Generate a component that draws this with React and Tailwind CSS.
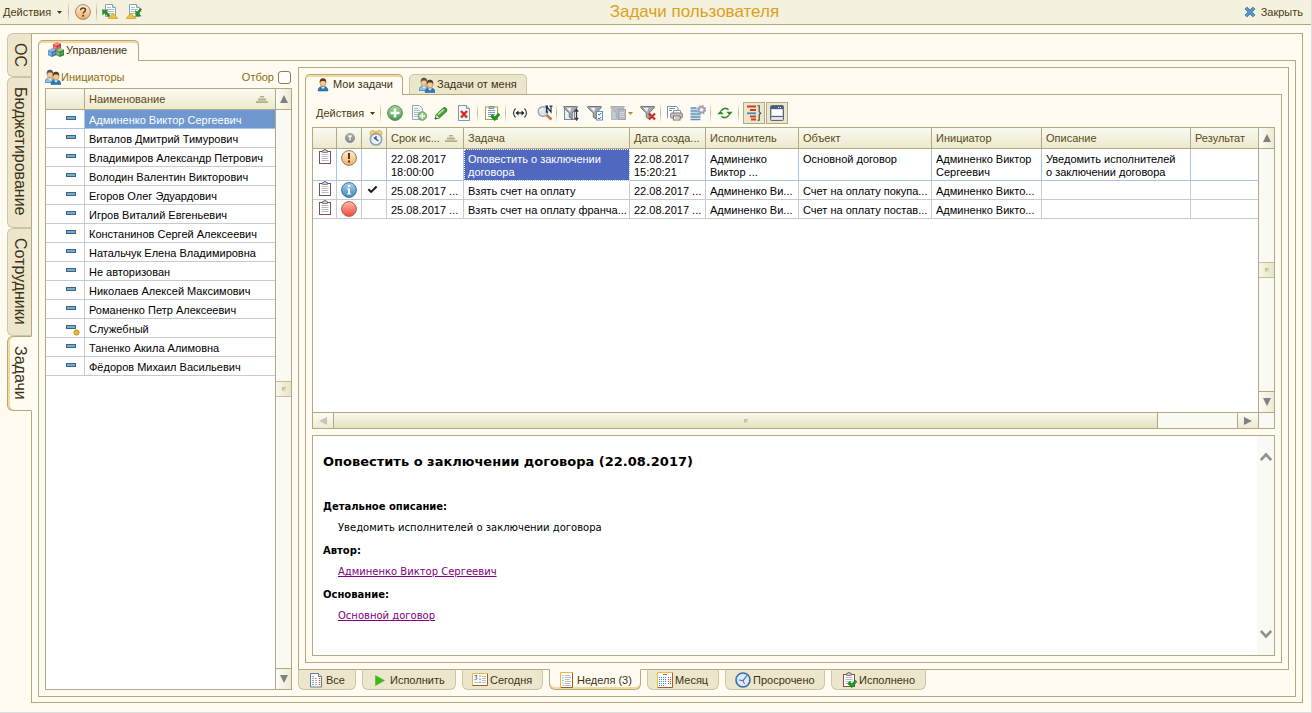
import React from "react";

function Svg({ children, size = 16, className = "" }) {
  return (
    <svg width={size} height={size} viewBox="0 0 16 16" aria-hidden="true" className={"shrink-0 " + className}>
      {children}
    </svg>
  );
}

const Ball = ({ id, light, dark, stroke }) => (
  <>
    <defs>
      <linearGradient id={id} x1="0" y1="0" x2="0" y2="1">
        <stop offset="0" stopColor={light} />
        <stop offset="1" stopColor={dark} />
      </linearGradient>
    </defs>
    <circle cx="8" cy="8" r="7.4" fill={"url(#" + id + ")"} stroke={stroke} />
  </>
);

const HelpIcon = () => (
  <Svg>
    <Ball id="help" light="#fdf1de" dark="#f3ae5c" stroke="#9a8472" />
    <path d="M5.6 6.2C5.6 4.6 6.6 3.9 8 3.9s2.5.8 2.5 2.1C10.500 7.600 8.200 7.700 8.200 9.600" fill="none" stroke="#6e3c1c" strokeWidth="1.5" />
    <rect x="7.300" y="10.800" width="1.800" height="1.800" fill="#6e3c1c" />
  </Svg>
);

const DocLines = () => (
  <>
    <path d="M3.500 .5h7l3 3v9h-10z" fill="#fff" stroke="#8ba3b6" />
    <path d="M10.500 .5v3h3" fill="#dde8f0" stroke="#8ba3b6" />
    <path d="M5 3.500h4M5 5.500h7M5 7.500h7M5 9.500h7" stroke="#a8c0d4" />
  </>
);

const DocOutIcon = () => (
  <Svg>
    <DocLines />
    <path d="M6 14.500l5-5.500 5 5.500z" fill="#f2c13c" stroke="#c89018" strokeWidth=".6" />
    <path d="M0 5.500l6.500.3-1.800 1.700 3.600 3.700-2 1.800L2.600 9.500.6 11.500z" fill="#2f8a2a" />
  </Svg>
);

const DocInIcon = () => (
  <Svg>
    <DocLines />
    <path d="M0 14.500l5-5.500 5 5.500z" fill="#f2c13c" stroke="#c89018" strokeWidth=".6" />
    <path d="M9.500 12.300L9.200 6l1.900 1.800L14.400 4l1.600 1.400-3 4.400 2.800 2.500z" fill="#2f8a2a" />
  </Svg>
);

const CloseIcon = () => (
  <Svg size={12}>
    <path d="M2.500 2.500l11 11M13.500 2.500l-11 11" stroke="#2f6fa4" strokeWidth="4.600" />
    <path d="M2.800 2.800l10.400 10.400M13.200 2.800L2.800 13.200" stroke="#5c9ccc" strokeWidth="2.400" />
  </Svg>
);

const Cube = ({ x, y, top, left, right }) => (
  <g transform={"translate(" + x + " " + y + ")"}>
    <path d="M0 2l4-2 4 1.500-4 2z" fill={top} />
    <path d="M0 2l4 1.500V9L0 7.300z" fill={left} />
    <path d="M8 1.500v5.700L4 9V3.500z" fill={right} />
    <path d="M2 2.800v5.200M6 2.500v5.200M0 4.800l4 1.500L8 4.500" fill="none" stroke="#fff" strokeWidth=".5" opacity=".6" />
  </g>
);

const CubesIcon = () => (
  <Svg>
    <Cube x={5} y={0} top="#f08a8a" left="#d84848" right="#b22c34" />
    <Cube x={0} y={6} top="#8fb8e4" left="#5a8ec8" right="#3268a8" />
    <Cube x={8} y={6} top="#8ad07c" left="#3fa03c" right="#237a28" />
  </Svg>
);

const Person = ({ x = 0, y = 0, hair = "#5b3a1c", shirt = "#2b78b8" }) => (
  <g transform={"translate(" + x + " " + y + ")"}>
    <path d="M0 13.500c0-3.200 1.800-4.700 5-4.700s5 1.500 5 4.700z" fill={shirt} stroke="#1b5488" strokeWidth=".5" />
    <path d="M3 9.200l2 2.600 2-2.600z" fill="#e4f2fb" />
    <ellipse cx="5" cy="5.500" rx="2.900" ry="3.500" fill="#f4c890" stroke="#a87838" strokeWidth=".5" />
    <path d="M1.800 5.500C1.400 2 3 .8 5 .8s3.600 1.200 3.200 4.700C7.600 3.800 6.500 3.500 5 3.500s-2.600.3-3.200 2z" fill={hair} />
  </g>
);

const UserIcon = () => (
  <Svg>
    <Person x={3} y={1.500} />
  </Svg>
);

const UsersIcon = () => (
  <Svg>
    <Person x={0} y={0} hair="#5c5248" shirt="#8cc0e4" />
    <Person x={6} y={2} hair="#4c3c28" />
  </Svg>
);

const AddIcon = () => (
  <Svg>
    <Ball id="add" light="#a8d69c" dark="#46984a" stroke="#5c8a5c" />
    <path d="M8 3.500v9M3.500 8h9" stroke="#fff" strokeWidth="2.600" />
  </Svg>
);

const AddDocIcon = () => (
  <Svg>
    <path d="M1.500 .5h7l3 3v11h-10z" fill="#f4f8fb" stroke="#93a9b8" />
    <path d="M3 3.500h4M3 5.500h6M3 7.500h6M3 9.500h4M3 11.500h3" stroke="#a8bccc" />
    <circle cx="11.300" cy="11" r="4.300" fill="#8cc480" stroke="#5c9460" strokeWidth=".8" />
    <path d="M11.300 8.300v5.400M8.600 11h5.400" stroke="#fff" strokeWidth="1.600" />
  </Svg>
);

const PencilIcon = () => (
  <Svg>
    <path d="M2 14l1.300-4.500L9.800 3.200q2-1.400 3.400 0t.2 3.400L6.700 12.800z" fill="#3aa634" stroke="#1e6e1e" strokeWidth=".7" />
    <path d="M5 9.700L10.800 4.400" stroke="#b4e8a0" strokeWidth="1.600" />
    <path d="M2 14l1.300-4.500 3.400 3.300z" fill="#f0e4b0" stroke="#1e6e1e" strokeWidth=".5" />
    <path d="M2 14l.6-1.800 1.300 1.300z" fill="#222" />
  </Svg>
);

const DeleteDocIcon = () => (
  <Svg>
    <path d="M2.500 .5h8l3 3v12h-11z" fill="#f2f7fa" stroke="#8096a8" />
    <path d="M10.500 .5v3h3" fill="#dce6ee" stroke="#8096a8" />
    <path d="M5 6l6 6.500M11 6l-6 6.500" stroke="#d03020" strokeWidth="2.500" />
  </Svg>
);

const Clipboard = () => (
  <>
    <rect x="2.500" y="2.500" width="11" height="12" fill="#fff" stroke="#84504a" />
    <path d="M5.500 3.500v-2h1.500V.5h2v1h1.500v2z" fill="#c8ccd0" stroke="#6c5c60" strokeWidth=".7" />
    <path d="M4.500 5.500h7M4.500 7.500h7M4.500 9.500h7M4.500 11.500h7" stroke="#b4bcc6" />
  </>
);

const ClipboardIcon = () => (
  <Svg className="inline-block">
    <Clipboard />
  </Svg>
);

const CheckMark = () => <path d="M6.500 11.500l2.200-1.900 2 2.200L14.300 8.200 16 9.700 10.800 15.700z" fill="#16a01c" stroke="#0c6c14" strokeWidth=".5" />;

const ClipDoneIcon = () => (
  <Svg>
    <Clipboard />
    <CheckMark />
  </Svg>
);

const ClipCheckIcon = () => (
  <Svg>
    <rect x="1.500" y="2" width="12" height="12.500" fill="#fff" stroke="#b89a40" />
    <path d="M5 3.500v-2h5v2z" fill="#b8c4cc" stroke="#68747c" strokeWidth=".7" />
    <path d="M4 5.500h7M4 7.500h7M4 9.500h7M4 11.500h4" stroke="#7ca4c4" />
    <CheckMark />
  </Svg>
);

const IntervalIcon = () => (
  <Svg>
    <path d="M3.500 3.500Q-.5 8 3.500 12.500M12.500 3.500q4 4.500 0 9" fill="none" stroke="#3c4650" strokeWidth="1.200" />
    <path d="M4.500 8h7" stroke="#222" strokeWidth="1.200" />
    <path d="M6.500 5.500L3.500 8l3 2.500zM9.500 5.500l3 2.500-3 2.500z" fill="#222" />
  </Svg>
);

const FindIcon = () => (
  <Svg>
    <path d="M9.500 10l5 4.500" stroke="#b47a50" strokeWidth="2.600" />
    <circle cx="6" cy="6.500" r="4.800" fill="#dce6ec" stroke="#9ca8b0" strokeWidth="1.400" />
    <path d="M3.500 6a2.800 2.800 0 012.500-2.200" fill="none" stroke="#fff" strokeWidth="1.200" />
    <path d="M9.500 7V1.500L14 7V1.500M8.500 1.200h2.500M12.500 1.200h3M8.500 7.200h2.500" fill="none" stroke="#1c3450" strokeWidth="1.200" />
  </Svg>
);

const Funnel = ({ fill = "#a4a8ac", stroke = "#686e74" }) => (
  <path d="M.8 1.500h13.400v1.300L9.300 8v6l-3-1.700V8L.8 2.800z" fill={fill} stroke={stroke} strokeWidth=".9" />
);

const FilterSortIcon = () => (
  <Svg>
    <rect x="1.500" y="2.500" width="10" height="12" fill="#e8eef2" stroke="#788894" />
    <Funnel />
    <path d="M3.500 2.800h5L7 7z" fill="#f2f2f2" />
    <path d="M13.500 5v9M11.800 6.700L13.500 4.500l1.700 2.200M11.800 12.800l1.700 2.200 1.700-2.200" fill="none" stroke="#2c3c48" strokeWidth="1.300" />
  </Svg>
);

const FilterValueIcon = () => (
  <Svg>
    <Funnel />
    <path d="M3.500 2.800h5L7 7z" fill="#f2f2f2" />
    <rect x="9.500" y="6.500" width="6" height="8.500" fill="#fff" stroke="#5c94c0" />
    <path d="M11 9l1.200 1.200L14.200 8M11 13l1.200 1 2-2.200" fill="none" stroke="#2c78b4" />
  </Svg>
);

const FilterHistoryIcon = () => (
  <Svg>
    <path d="M1.500 5v9.500h6V5z" fill="#c4ccd2" stroke="#b0b8c0" />
    <Funnel fill="#b8bcc0" stroke="#a4abb2" />
    <rect x="8.500" y="4.500" width="7" height="10" fill="#b4bcc4" stroke="#9ca8b0" />
    <path d="M10 7.500h4M10 9.500h4M10 11.500h4" stroke="#d4dae0" />
  </Svg>
);

const FilterOffIcon = () => (
  <Svg>
    <Funnel />
    <path d="M3.500 2.800h5L7 7z" fill="#f2f2f2" />
    <path d="M9 8.500l6 6M15 8.500l-6 6" stroke="#c82c1c" strokeWidth="2.200" />
  </Svg>
);

const PrintIcon = () => (
  <Svg>
    <path d="M.5 12.500v-11h9l1.500 1.500v2" fill="#fff" stroke="#6c96b4" />
    <path d="M.5 12.500v-11h9" fill="none" stroke="#6c96b4" />
    <path d="M2 3.500h6M2 5.500h3" stroke="#6c96b4" />
    <path d="M6.500 8V5.500h7V8" fill="#fff" stroke="#909498" />
    <rect x="3.500" y="8" width="12" height="5" rx="1.500" fill="#c4c4c0" stroke="#787874" />
    <rect x="6.500" y="11" width="6.500" height="4" fill="#fff" stroke="#6c7074" />
    <path d="M8 13h4" stroke="#e09038" />
  </Svg>
);

const ListGearIcon = () => (
  <Svg>
    <path d="M.5 3h6M.5 6h7M.5 9h10M.5 12h10M.5 14.500h10" stroke="#5c90b4" strokeWidth="1.600" />
    <path d="M.5 4.500h6M.5 7.500h7M.5 10.500h10" stroke="#c4dcea" />
    <circle cx="11.500" cy="4.800" r="3" fill="#c8ccd8" stroke="#9a9eb0" strokeWidth="1.400" />
    <circle cx="11.500" cy="4.800" r="4.200" fill="none" stroke="#9a9eb0" strokeWidth="1.200" strokeDasharray="1.700 1.600" />
    <circle cx="11.500" cy="4.800" r="1.200" fill="#fff" />
  </Svg>
);

const RefreshIcon = () => (
  <Svg>
    <path d="M4.200 6A4.500 4.500 0 0111.500 4.800M11.800 10a4.500 4.500 0 01-7.300 1.200" fill="none" stroke="#2c8a2c" strokeWidth="1.600" />
    <path d="M9.300 6.800h6.400L12.500 10.200zM.3 9.200L3.500 5.800l3.200 3.400z" fill="#2c8a2c" />
  </Svg>
);

const GroupIcon = () => (
  <Svg>
    <path d="M1 1.500h9M4 5h6M4 11.500h6" stroke="#d03c24" strokeWidth="2" />
    <path d="M1 8.300h9" stroke="#4888bc" strokeWidth="1.800" />
    <path d="M5 14.500h5" stroke="#d03c24" strokeWidth="2" />
    <path d="M11.500 .8h1.700v6l1.500 1.400-1.500 1.400v5.600h-1.700" fill="none" stroke="#404448" strokeWidth="1.100" />
  </Svg>
);

const WindowIcon = () => (
  <Svg>
    <rect x="1.500" y=".5" width="13" height="15" rx="1" fill="#c4ccd4" stroke="#606870" />
    <rect x="2" y="1" width="12" height="3" fill="#485c80" />
    <path d="M9 2.500h1M11 2.500h1" stroke="#fff" />
    <rect x="3" y="4.500" width="10" height="6" fill="#fff" />
    <path d="M2 11.500h12" stroke="#606870" />
    <path d="M3 13.500h10" stroke="#e8ecf0" strokeWidth="2" />
  </Svg>
);

const WarnIcon = () => (
  <Svg>
    <Ball id="warn" light="#fdf0d8" dark="#f0b060" stroke="#8c7c6c" />
    <path d="M8 3v6" stroke="#5c3418" strokeWidth="2" />
    <rect x="7" y="10.500" width="2" height="2" fill="#5c3418" />
  </Svg>
);

const InfoIcon = () => (
  <Svg>
    <Ball id="info" light="#a8d4f0" dark="#3c88c0" stroke="#4c6c88" />
    <rect x="6.900" y="3" width="2.400" height="2.200" fill="#fff" />
    <path d="M6 6.500h3v5h1.200v1H5.800v-1H7v-4H6z" fill="#fff" />
  </Svg>
);

const RedIcon = () => (
  <Svg>
    <Ball id="red" light="#ffb8a8" dark="#f04a3c" stroke="#a8625c" />
  </Svg>
);

const TickIcon = () => (
  <Svg size={11}>
    <path d="M2 7.500l4 4L14 3.500" fill="none" stroke="#1c1c1c" strokeWidth="3" />
  </Svg>
);

const TypeIcon = () => (
  <Svg size={10}>
    <Ball id="kind" light="#b4b4b4" dark="#808488" stroke="#808488" />
    <path d="M5 5h6M8 5v7" stroke="#fff" strokeWidth="2" />
  </Svg>
);

const AlarmIcon = () => (
  <Svg>
    <circle cx="5" cy="3.500" r="3" fill="#f4d068" stroke="#c09830" strokeWidth=".6" />
    <circle cx="11" cy="3.500" r="3" fill="#f4d068" stroke="#c09830" strokeWidth=".6" />
    <circle cx="8" cy="9.300" r="5.700" fill="#e8f0f8" stroke="#8ca0b8" strokeWidth="1.600" />
    <path d="M8 6v3.300l2.400 1.600M8 9.300L6 7.500" fill="none" stroke="#2c4870" strokeWidth="1.200" />
  </Svg>
);

const DashIcon = ({ marked }) => (
  <svg width="14" height="12" viewBox="0 0 14 12" aria-hidden="true" className="ml-5 mt-px">
    <rect x=".5" y="1.500" width="9" height="3" fill="#78acd0" stroke="#3c6484" />
    {marked && <circle cx="10.500" cy="8.500" r="2.600" fill="#f0b828" stroke="#a87c18" strokeWidth=".8" />}
  </svg>
);

const SortIcon = () => (
  <svg width="12" height="7" viewBox="0 0 12 7" aria-hidden="true" className="shrink-0">
    <path d="M4 .5h4M2 3.500h8M0 6.200h12" stroke="#b4ac84" strokeWidth="1.800" />
  </svg>
);

const AllIcon = () => (
  <Svg>
    <path d="M2.500 1.500h8l3 3v10.500h-11z" fill="#fff" stroke="#6c7c8c" />
    <path d="M10.500 1.500v3h3" fill="#e0e8f0" stroke="#6c7c8c" />
    <path d="M5 4v9" stroke="#5c94c8" strokeWidth="1.500" strokeDasharray="1 1" />
    <path d="M8 6v7" stroke="#a8b0b8" strokeWidth="2" strokeDasharray="1 1" />
    <path d="M11.500 6v7" stroke="#d8583c" strokeWidth="1.500" strokeDasharray="1 1" />
  </Svg>
);

const PlayIcon = () => (
  <Svg>
    <path d="M3.500 3.500l9 5-9 5z" fill="#3cb81c" stroke="#3cb81c" strokeWidth=".5" />
  </Svg>
);

const TodayIcon = () => (
  <Svg>
    <rect x=".5" y="1.500" width="15" height="12" fill="#fff" />
    <path d="M.5 14V1.500H15" fill="none" stroke="#f0b838" />
    <path d="M.5 13.500h15v-12" fill="none" stroke="#9c5c34" />
    <path d="M2.500 3.500h2.500l-1.200 2c2.200.2 1.700 2.700-1.300 2" fill="none" stroke="#3880c0" />
    <path d="M8 3.500v9" stroke="#606870" strokeDasharray="1.500 1.500" />
    <path d="M10 4.500h4M10 6.500h4M10 8.500h4M10 10.500h4M2.500 10.500h4" stroke="#b4bcc4" />
  </Svg>
);

const WeekIcon = () => (
  <Svg>
    <rect x="1.500" y=".5" width="12" height="15" fill="#fff" />
    <path d="M1.500 16V.5H13" fill="none" stroke="#f0b838" />
    <path d="M2 15.500h11.500V.5" fill="none" stroke="#9c5c34" />
    <path d="M4 3v11" stroke="#5890c4" strokeDasharray="1 1.500" />
    <path d="M6 3.500h5M6 5.500h6M6 7.500h5M6 9.500h6M6 11.500h5M6 13.500h6" stroke="#b4bcc4" />
  </Svg>
);

const MonthIcon = () => (
  <Svg>
    <rect x=".5" y=".5" width="15" height="15" fill="#fff" />
    <path d="M.5 16V.5H15" fill="none" stroke="#f0b838" />
    <path d="M1 15.500h14.500V.5" fill="none" stroke="#9c5c34" />
    <path d="M6 2.500h4" stroke="#707880" />
    <path d="M2 5.500h8M2 7.500h8M2 9.500h8M2 11.500h8M2 13.500h6" stroke="#4888c4" strokeDasharray="1 1" />
    <path d="M11 5.500h3M11 7.500h3M11 9.500h3M11 11.500h3" stroke="#d04830" strokeDasharray="1 1" />
  </Svg>
);

const ClockIcon = () => (
  <Svg>
    <circle cx="8" cy="8" r="7" fill="#dcecfa" stroke="#3c6ca8" strokeWidth="1.600" />
    <circle cx="8" cy="8" r="5.500" fill="none" stroke="#a4c4e4" strokeWidth=".8" strokeDasharray="1 1.900" />
    <path d="M12 3.500L8 8.500 4 8" fill="none" stroke="#4470a4" strokeWidth="1.200" />
    <path d="M8 8.500l1.500 3.500" stroke="#c84838" />
  </Svg>
);

const Caret = ({ className = "" }) => (
  <svg width="5" height="3" viewBox="0 0 5 3" aria-hidden="true" className={"shrink-0 " + className}>
    <path d="M0 0h5L2.500 3z" fill="currentColor" />
  </svg>
);

const Sep = () => <span className="h-5 w-px shrink-0 bg-linear-to-b from-transparent via-[#bdb693] to-transparent" />;

const scrollArrow = {
  up: "M4 0l4 8H0z",
  down: "M0 0h8L4 8z",
  left: "M8 0v8L0 4z",
  right: "M0 0l8 4-8 4z",
};

function Arrow({ dir, muted }) {
  return (
    <svg width="8" height="8" viewBox="0 0 8 8" aria-hidden="true">
      <path d={scrollArrow[dir]} fill={muted ? "#c4c4b8" : "#808080"} />
    </svg>
  );
}

function Grip() {
  return <span className="size-1 rounded-full border-t border-l border-[#b4b090] bg-[#dcd8bc]" />;
}

function VScroll() {
  return (
    <div className="flex w-4 shrink-0 flex-col border-l border-[#b0a982] bg-[#faf9f4]">
      <button aria-label="Вверх" className="flex h-[21px] items-center justify-center border-b border-[#b0a982] bg-linear-to-r from-[#fcfbf6] to-[#eeead2]">
        <Arrow dir="up" />
      </button>
      <div className="flex-1" />
      <div className="flex h-4 items-center justify-center border-y border-[#c4be9c] bg-linear-to-r from-[#f8f6e8] to-[#e8e4c4]">
        <Grip />
      </div>
      <div className="flex-1" />
      <button aria-label="Вниз" className="flex h-[21px] items-center justify-center border-t border-[#b0a982] bg-linear-to-r from-[#fcfbf6] to-[#eeead2]">
        <Arrow dir="down" />
      </button>
    </div>
  );
}

function HScroll() {
  return (
    <div className="flex h-4 shrink-0 border-t border-[#b0a982] bg-[#faf9f4]">
      <button aria-label="Влево" className="flex w-[21px] items-center justify-center border-r border-[#b0a982] bg-linear-to-b from-[#fcfbf6] to-[#eeead2]">
        <Arrow dir="left" muted />
      </button>
      <div className="mr-[79px] flex flex-1 items-center justify-center border-r border-[#b0a982] bg-linear-to-b from-[#f9f8ec] to-[#e6e1c0]">
        <Grip />
      </div>
      <button aria-label="Вправо" className="flex w-[21px] items-center justify-center border-l border-[#b0a982] bg-linear-to-b from-[#fcfbf6] to-[#eeead2]">
        <Arrow dir="right" />
      </button>
      <div className="w-4 border-l border-[#b0a982]" />
    </div>
  );
}

const sections = [
  { name: "ОС", cls: "h-11" },
  { name: "Бюджетирование", cls: "h-[151px]" },
  { name: "Сотрудники", cls: "h-[108px]" },
  { name: "Задачи", cls: "h-[75px]", active: true },
];

const initiators = [
  "Админенко Виктор Сергеевич",
  "Виталов Дмитрий Тимурович",
  "Владимиров Александр Петрович",
  "Володин Валентин Викторович",
  "Егоров Олег Эдуардович",
  "Игров Виталий Евгеньевич",
  "Констанинов Сергей Алексеевич",
  "Натальчук Елена Владимировна",
  "Не авторизован",
  "Николаев Алексей Максимович",
  "Романенко Петр Алексеевич",
  "Служебный",
  "Таненко Акила Алимовна",
  "Фёдоров Михаил Васильевич",
];

const tasks = [
  {
    icon: <WarnIcon />,
    cells: [
      ["22.08.2017", "18:00:00"],
      ["Оповестить о заключении", "договора"],
      ["22.08.2017", "15:20:21"],
      ["Админенко", "Виктор ..."],
      ["Основной договор"],
      ["Админенко Виктор", "Сергеевич"],
      ["Уведомить исполнителей", "о заключении договора"],
      [""],
    ],
    current: true,
  },
  {
    icon: <InfoIcon />,
    done: true,
    cells: [["25.08.2017 ..."], ["Взять счет на оплату"], ["22.08.2017 ..."], ["Админенко Ви..."], ["Счет на оплату покупа..."], ["Админенко Викто..."], [""], [""]],
  },
  {
    icon: <RedIcon />,
    cells: [["25.08.2017 ..."], ["Взять счет на оплату франча..."], ["22.08.2017 ..."], ["Админенко Ви..."], ["Счет на оплату постав..."], ["Админенко Викто..."], [""], [""]],
  },
];

const periods = [
  { name: "Все", icon: <AllIcon />, cls: "w-[58px]" },
  { name: "Исполнить", icon: <PlayIcon />, cls: "w-[94px]" },
  { name: "Сегодня", icon: <TodayIcon />, cls: "w-[81px]" },
  { name: "Неделя (3)", icon: <WeekIcon />, cls: "w-[92px]", active: true },
  { name: "Месяц", icon: <MonthIcon />, cls: "w-[72px]" },
  { name: "Просрочено", icon: <ClockIcon />, cls: "w-[100px]" },
  { name: "Исполнено", icon: <ClipDoneIcon />, cls: "w-[95px]" },
];

const th = "h-[21px] overflow-hidden border-b border-[#b0a982] p-0 pl-1 text-left font-normal text-[#5c4a14]";

function Tool({ label, children, className = "w-6" }) {
  return (
    <button aria-label={label} className={"flex h-[22px] shrink-0 items-center justify-center " + className}>
      {children}
    </button>
  );
}

function TopBar() {
  return (
    <header className="flex h-[25px] shrink-0 items-center border-b border-[#b0a982] bg-[#f4f1de] text-[#4a3c10]">
      <button className="flex items-center gap-1.5 pl-[3px]">
        Действия <Caret />
      </button>
      <div className="flex items-center pl-1.5">
        <Sep />
        <Tool label="Справка" className="w-[27px]"><HelpIcon /></Tool>
        <Sep />
        <Tool label="Выгрузить" className="w-[26px]"><DocOutIcon /></Tool>
        <Tool label="Загрузить" className="w-[22px]"><DocInIcon /></Tool>
      </div>
      <h1 className="flex-1 text-center text-[17px] leading-5 text-[#dca01c]">Задачи пользователя</h1>
      <button className="flex items-center gap-[5px] pr-2">
        <CloseIcon /> Закрыть
      </button>
    </header>
  );
}

function Initiators() {
  return (
    <section className="flex w-[247px] shrink-0 flex-col">
      <div className="flex h-[21px] items-center pb-px text-[#8c6c10]">
        <UsersIcon />
        <h2 className="flex-1">Инициаторы</h2>
        <label className="flex items-center gap-1">
          Отбор
          <input type="checkbox" className="mr-px size-[13px] appearance-none rounded-[3px] border border-[#8c7c54] bg-white" />
        </label>
      </div>
      <div className="flex min-h-0 flex-1 border border-[#b0a982] bg-white">
        <div className="min-w-0 flex-1 overflow-hidden">
          <table className="w-full table-fixed border-separate border-spacing-0">
            <colgroup>
              <col className="w-[39px]" />
              <col />
            </colgroup>
            <thead>
              <tr className="bg-linear-to-b from-[#fafaf0] to-[#ece8cc]">
                <th className={th + " border-r"} />
                <th className={th}>
                  <span className="flex items-center justify-between pr-[7px]">
                    Наименование <SortIcon />
                  </span>
                </th>
              </tr>
            </thead>
            <tbody>
              {initiators.map((name, i) => (
                <tr key={name} className="h-[19px]">
                  <td className={"border-r border-b p-0 align-top " + (i === 0 ? "border-[#a8c4e8]" : "border-[#c4ccd2]")}>
                    <div className="h-[18px] pt-1"><DashIcon marked={name === "Служебный"} /></div>
                  </td>
                  <td className={"border-b p-0 pt-1 pl-1 align-top whitespace-nowrap " + (i === 0 ? "border-[#a8c4e8] bg-[#6f98d0] text-white" : "border-[#c4ccd2]")}>{name}</td>
                </tr>
              ))}
            </tbody>
          </table>
        </div>
        <VScroll />
      </div>
    </section>
  );
}

function Toolbar() {
  return (
    <div className="flex h-8 shrink-0 items-center pt-1 text-[#4a3c10]">
      <button className="flex w-[68px] items-center gap-1.5 pl-1">
        Действия <Caret />
      </button>
      <Sep />
      <Tool label="Добавить" className="w-7"><AddIcon /></Tool>
      <Tool label="Скопировать" className="w-5"><AddDocIcon /></Tool>
      <Tool label="Изменить" className="w-[23px]"><PencilIcon /></Tool>
      <Tool label="Удалить" className="mr-0.5 w-[23px]"><DeleteDocIcon /></Tool>
      <Sep />
      <Tool label="Исполнить" className="w-[27px]"><ClipCheckIcon /></Tool>
      <Sep />
      <Tool label="Интервал" className="w-[27px]"><IntervalIcon /></Tool>
      <Tool label="Найти" className="w-[23px]"><FindIcon /></Tool>
      <Sep />
      <Tool label="Отбор и сортировка" className="w-7"><FilterSortIcon /></Tool>
      <Tool label="Отбор по значению" className="w-5"><FilterValueIcon /></Tool>
      <Tool label="История отборов" className="w-8 gap-0.5 text-[#a08848]"><FilterHistoryIcon /><Caret /></Tool>
      <Tool label="Отключить отбор" className="mr-px w-[22px]"><FilterOffIcon /></Tool>
      <Sep />
      <Tool label="Печать" className="w-[27px]"><PrintIcon /></Tool>
      <Tool label="Настройка списка" className="mr-0.5 w-5"><ListGearIcon /></Tool>
      <Sep />
      <Tool label="Обновить" className="w-[27px]"><RefreshIcon /></Tool>
      <Sep />
      <Tool label="Группировка" className="ml-1 w-[22px] border border-[#b0a982] bg-[#ece6cc]"><GroupIcon /></Tool>
      <Tool label="Панель описания" className="ml-px w-[22px] border border-[#b0a982] bg-[#ece6cc]"><WindowIcon /></Tool>
    </div>
  );
}

function TaskTable() {
  const heads = ["Срок ис...", "Задача", "Дата созда...", "Исполнитель", "Объект", "Инициатор", "Описание", "Результат"];
  return (
    <div className="flex min-h-0 flex-1 flex-col border border-[#b0a982] bg-white">
      <div className="flex min-h-0 flex-1">
        <div className="min-w-0 flex-1 overflow-hidden">
          <table className="w-full table-fixed border-separate border-spacing-0">
            <colgroup>
              <col className="w-6" />
              <col className="w-[25px]" />
              <col className="w-[25px]" />
              <col className="w-[77px]" />
              <col className="w-[166px]" />
              <col className="w-[76px]" />
              <col className="w-[93px]" />
              <col className="w-[133px]" />
              <col className="w-[110px]" />
              <col />
              <col className="w-[67px]" />
            </colgroup>
            <thead>
              <tr className="bg-linear-to-b from-[#fafaf0] to-[#ece8cc]">
                <th className={th + " border-r"} />
                <th className={th + " border-r"}>
                  <span className="flex pl-1"><TypeIcon /></span>
                </th>
                <th className={th + " border-r"}>
                  <span className="flex pl-0.5"><AlarmIcon /></span>
                </th>
                {heads.map((h, i) => (
                  <th key={h} className={th + " whitespace-nowrap " + (i < heads.length - 1 ? "border-r" : "")}>
                    {i === 0 ? (
                      <span className="flex items-center justify-between pr-1.5">
                        {h} <SortIcon />
                      </span>
                    ) : (
                      h
                    )}
                  </th>
                ))}
              </tr>
            </thead>
            <tbody>
              {tasks.map((t, r) => {
                const line = t.current ? " border-[#a8c4e8]" : " border-[#c4ccd2]";
                const base = "border-r border-b p-0 align-top" + line;
                return (
                  <tr key={r}>
                    <td className={base + " pl-1 leading-none"}><ClipboardIcon /></td>
                    <td className={base}><div className="flex justify-center pt-px">{t.icon}</div></td>
                    <td className={base}>{t.done && <div className="flex justify-center pt-[3px] pr-1"><TickIcon /></div>}</td>
                    {t.cells.map((c, i) => {
                      const selected = t.current && i === 1;
                      return (
                        <td
                          key={i}
                          className={
                            "border-b p-0 pt-1 pb-px pl-1 align-top whitespace-nowrap" + line +
                            (i < t.cells.length - 1 ? " border-r" : "") +
                            (selected ? " bg-[#5068c0] text-white outline-1 -outline-offset-1 outline-dotted outline-white" : "")
                          }
                        >
                          {c.map((s) => (
                            <div key={s}>{s}</div>
                          ))}
                        </td>
                      );
                    })}
                  </tr>
                );
              })}
            </tbody>
          </table>
        </div>
        <VScroll />
      </div>
      <HScroll />
    </div>
  );
}

function Chevron({ up }) {
  return (
    <svg width="12" height="10" viewBox="0 0 12 10" aria-hidden="true">
      <path d={up ? "M.8 8L6 2.500 11.200 8" : "M.8 2L6 7.500 11.200 2"} fill="none" stroke="#909090" strokeWidth="2.600" />
    </svg>
  );
}

function Details() {
  return (
    <article className="mt-1.5 flex h-[221px] shrink-0 border border-[#b0a982] bg-white font-['DejaVu_Sans',sans-serif] text-[10px] leading-4 text-black">
      <div className="flex-1 pt-[18px] pl-2.5">
        <h2 className="text-[13px] font-bold">Оповестить о заключении договора (22.08.2017)</h2>
        <dl className="pt-[29px]">
          <dt className="font-bold">Детальное описание:</dt>
          <dd className="mt-[5px] mb-[7px] pl-[15px]">Уведомить исполнителей о заключении договора</dd>
          <dt className="font-bold">Автор:</dt>
          <dd className="mt-[5px] mb-[7px] pl-[15px]"><a href="#author" className="text-[#800080] underline">Админенко Виктор Сергеевич</a></dd>
          <dt className="font-bold">Основание:</dt>
          <dd className="mt-[5px] pl-[15px]"><a href="#basis" className="text-[#800080] underline">Основной договор</a></dd>
        </dl>
      </div>
      <div className="flex w-[17px] flex-col items-center justify-between bg-[#faf9f4] pt-4 pb-4">
        <button aria-label="Прокрутить вверх"><Chevron up /></button>
        <button aria-label="Прокрутить вниз"><Chevron /></button>
      </div>
    </article>
  );
}

export default function App() {
  return (
    <div className="flex h-screen min-h-[600px] flex-col border-r border-b border-[#dedede] bg-[#fffbf0] font-['Liberation_Sans',Arial,sans-serif] text-[11px] leading-[13px] text-black">
      <TopBar />
      <main className="flex min-h-0 flex-1 pt-2 pr-2 pb-[9px] pl-[7px]">
        <nav className="relative z-10 -mr-px w-[25px] shrink-0">
          {sections.map((s) => (
            <button
              key={s.name}
              className={
                "flex w-full items-center rounded-l-md border pt-[9px] text-[16px] leading-[20px] text-[#3c3214] [writing-mode:vertical-rl] " +
                s.cls +
                (s.active
                  ? " border-[#b0a982] border-r-transparent bg-[#fffbf0] shadow-[inset_2px_0_0_#f8d898]"
                  : " border-[#cdc6a4] border-r-[#b0a982] bg-[#ece6cc]")
              }
            >
              {s.name}
            </button>
          ))}
        </nav>
        <div className="flex min-w-0 flex-1 flex-col border border-[#b0a982] px-1.5 pt-1.5 pb-[5px]">
          <div className="relative z-10 -mb-px flex h-[21px] shrink-0">
            <button className="flex w-[101px] items-center gap-0.5 rounded-t-[5px] border border-b-0 border-[#b0a982] bg-[#fffbf0] pb-0.5 pl-[9px] text-[#3c3214] shadow-[inset_0_2px_0_#f8d898]">
              <CubesIcon /> Управление
            </button>
          </div>
          <div className="flex min-h-0 flex-1 gap-1.5 border border-[#b0a982] px-1.5 pt-1.5 pb-1.5">
            <Initiators />
            <div className="flex min-w-0 flex-1 flex-col">
              <section className="flex min-h-0 flex-1 flex-col border border-[#b0a982] p-1.5">
                <div className="relative z-10 -mb-px flex h-[21px] shrink-0 gap-1.5 text-[#3c3214]">
                  <button className="flex w-[98px] items-center gap-0.5 rounded-t-[5px] border border-b-0 border-[#b0a982] bg-[#fffbf0] pb-0.5 pl-[9px] shadow-[inset_0_2px_0_#f8d898]">
                    <UserIcon /> Мои задачи
                  </button>
                  <button className="mb-px flex w-[118px] items-center gap-0.5 rounded-t-[5px] border border-b-0 border-[#cdc6a4] bg-[#ece6cc] pl-[9px]">
                    <UsersIcon /> Задачи от меня
                  </button>
                </div>
                <div className="flex min-h-0 flex-1 flex-col border border-[#b0a982] px-1.5 pb-1.5">
                  <Toolbar />
                  <TaskTable />
                  <Details />
                </div>
              </section>
              <nav className="relative z-10 -mt-px flex h-[21px] shrink-0 gap-1.5 text-[#3c3214]">
                {periods.map((p) => (
                  <button
                    key={p.name}
                    className={
                      "flex shrink-0 items-center gap-0.5 rounded-b-md border pt-px pl-[9px] " +
                      p.cls +
                      (p.active
                        ? " border-[#b0a982] border-t-[#fffbf0] bg-[#fffbf0] shadow-[inset_0_-2px_0_#f8d898]"
                        : " border-[#cdc6a4] border-t-[#b0a982] bg-[#ece6cc]")
                    }
                  >
                    {p.icon} {p.name}
                  </button>
                ))}
              </nav>
            </div>
          </div>
        </div>
      </main>
    </div>
  );
}
